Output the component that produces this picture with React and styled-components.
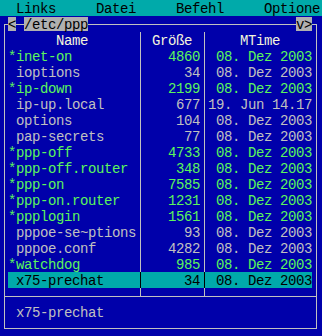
import React from 'react';
import styled, { createGlobalStyle } from 'styled-components';

const C = {
  blue: '#0000aa',
  cyan: '#00aaaa',
  text: '#c0c0c0',
  label: '#b0b0b0',
  green: '#5cf55c',
  head: '#f4f4dc',
  line: '#c0c0c0',
};

const Global = createGlobalStyle`
  html, body { margin: 0; padding: 0; background: ${C.blue}; }
  body { width: 322px; height: 336px; overflow: hidden; }
`;

const Screen = styled.div`
  width: 322px;
  height: 336px;
  background: ${C.blue};
  font-family: "Liberation Mono", "Courier New", monospace;
  font-size: 14px;
  letter-spacing: -0.4px;
  line-height: 18px;
  color: ${C.text};
  white-space: pre;
  overflow: hidden;
`;

const MenuBar = styled.div`
  height: 16px;
  background: ${C.cyan};
  color: #000;
`;

const MenuItems = styled.div`
  display: flex;
  gap: 40px;
  width: 320px;
  height: 16px;
  padding-left: 16px;
  box-sizing: border-box;
  overflow: hidden;
`;

const MenuItem = styled.span`
  flex: none;
  height: 16px;
`;

const TitleRow = styled.div`
  display: flex;
  width: 320px;
  height: 16px;
`;

const Corner = styled.div`
  flex: none;
  width: 8px;
  background:
    linear-gradient(${C.line}, ${C.line}) ${(p) => (p.$right ? '0 8px / 5px 1px' : '4px 8px / 4px 1px')} no-repeat,
    linear-gradient(${C.line}, ${C.line}) 4px 8px / 1px 8px no-repeat;
`;

const HLine = styled.div`
  flex: ${(p) => (p.$grow ? '1 1 auto' : 'none')};
  width: ${(p) => (p.$cols || 0) * 8}px;
  background: linear-gradient(${C.line}, ${C.line}) 0 8px / 100% 1px no-repeat;
`;

const Tag = styled.div`
  flex: none;
  align-self: center;
  width: ${(p) => p.$cols * 8}px;
  height: 14px;
  line-height: 16px;
  background: ${C.label};
  color: #000;
`;

const Panel = styled.div`
  margin-left: 4px;
  width: 313px;
  box-sizing: border-box;
  border: 1px solid ${C.line};
  border-top: none;
`;

const List = styled.div`
  padding: 0 4px 0 3px;
`;

const Row = styled.div`
  display: grid;
  grid-template-columns: 128px 8px 56px 8px 104px;
  height: ${(p) => (p.$tail ? 8 : 16)}px;
  background: ${(p) => (p.$selected ? C.cyan : 'transparent')};
  color: ${(p) => (p.$selected ? '#000' : p.$header ? C.head : p.$exec ? C.green : C.text)};
`;

const Cell = styled.div`
  height: 100%;
  overflow: hidden;
  text-align: ${(p) => p.$align || 'left'};
`;

const Sep = styled.div`
  height: 100%;
  background: linear-gradient(${(p) => (p.$dark ? '#000' : C.line)}, ${(p) => (p.$dark ? '#000' : C.line)}) 4px 0 / 1px 100% no-repeat;
`;

const Status = styled.div`
  border-top: 1px solid ${C.line};
  padding: 7px 4px 8px 11px;
  height: 16px;
  line-height: 18px;
  color: ${C.text};
`;

const files = [
  { name: 'inet-on', size: 4860, date: '08. Dez 2003', exec: true },
  { name: 'ioptions', size: 34, date: '08. Dez 2003' },
  { name: 'ip-down', size: 2199, date: '08. Dez 2003', exec: true },
  { name: 'ip-up.local', size: 677, date: '19. Jun 14.17' },
  { name: 'options', size: 104, date: '08. Dez 2003' },
  { name: 'pap-secrets', size: 77, date: '08. Dez 2003' },
  { name: 'ppp-off', size: 4733, date: '08. Dez 2003', exec: true },
  { name: 'ppp-off.router', size: 348, date: '08. Dez 2003', exec: true },
  { name: 'ppp-on', size: 7585, date: '08. Dez 2003', exec: true },
  { name: 'ppp-on.router', size: 1231, date: '08. Dez 2003', exec: true },
  { name: 'ppplogin', size: 1561, date: '08. Dez 2003', exec: true },
  { name: 'pppoe-se~ptions', size: 93, date: '08. Dez 2003' },
  { name: 'pppoe.conf', size: 4282, date: '08. Dez 2003' },
  { name: 'watchdog', size: 985, date: '08. Dez 2003', exec: true },
  { name: 'x75-prechat', size: 34, date: '08. Dez 2003', selected: true },
];

export default function App() {
  return (
    <Screen>
      <Global />
      <MenuBar>
        <MenuItems>
          <MenuItem>Links</MenuItem>
          <MenuItem>Datei</MenuItem>
          <MenuItem>Befehl</MenuItem>
          <MenuItem>Optionen</MenuItem>
        </MenuItems>
      </MenuBar>
      <TitleRow>
        <Corner />
        <Tag $cols={1}>{'<'}</Tag>
        <HLine $cols={1} />
        <Tag $cols={8}>/etc/ppp</Tag>
        <HLine $grow />
        <Tag $cols={2}>{'v>'}</Tag>
        <Corner $right />
      </TitleRow>
      <Panel>
        <List>
          <Row $header>
            <Cell $align="center">Name</Cell>
            <Sep />
            <Cell $align="center">Größe</Cell>
            <Sep />
            <Cell $align="center">MTime</Cell>
          </Row>
          {files.map((f) => (
            <Row key={f.name} $exec={f.exec} $selected={f.selected}>
              <Cell>{(f.exec ? '*' : ' ') + f.name}</Cell>
              <Sep $dark={f.selected} />
              <Cell $align="right">{String(f.size)}</Cell>
              <Sep $dark={f.selected} />
              <Cell $align="right">{f.date}</Cell>
            </Row>
          ))}
          <Row $tail>
            <Cell />
            <Sep />
            <Cell />
            <Sep />
            <Cell />
          </Row>
        </List>
        <Status>x75-prechat</Status>
      </Panel>
    </Screen>
  );
}
